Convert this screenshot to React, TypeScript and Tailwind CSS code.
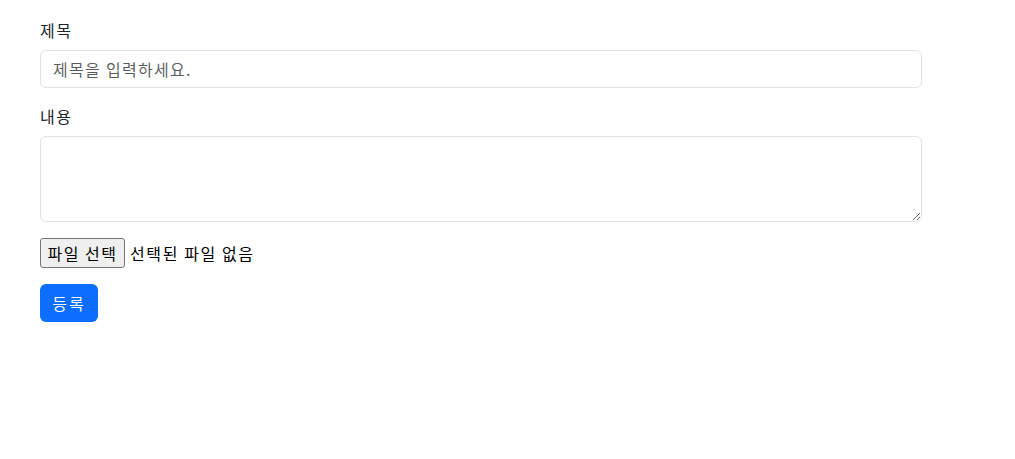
import React from "react";

export default function App() {
  return (
    <div
      className="min-h-[459px] bg-white text-[#212529] text-[16px] leading-[24px] tracking-[1.5px]"
      style={{ fontFamily: '"Noto Sans CJK KR", "Noto Sans", "Liberation Sans", sans-serif' }}
    >
      <div className="pl-[40px] pt-[18px] w-[922px]">
        <form className="flex flex-col" onSubmit={(e) => e.preventDefault()}>
          <div className="mb-4">
            <label className="block mb-2">제목</label>
            <input
              type="text"
              placeholder="제목을 입력하세요."
              className="block w-full h-[38px] px-3 py-[6px] border border-[#dee2e6] rounded-[6px] bg-white text-[16px] leading-[24px] tracking-[1.3px] placeholder:text-[#212529bf] outline-none"
            />
          </div>
          <div className="mb-4">
            <label className="block mb-2">내용</label>
            <textarea
              rows={3}
              className="block w-full h-[86px] px-3 py-[6px] border border-[#dee2e6] rounded-[6px] bg-white text-[16px] leading-[24px] outline-none"
            />
          </div>
          <div className="mb-4 flex items-center h-[30px]">
            <button
              type="button"
              className="h-[30px] w-[85px] px-0 bg-[#efefef] border border-[#767676] rounded-[3px] text-[16px] leading-[20px] text-black tracking-[1.5px]"
            >
              파일 선택
            </button>
            <span className="ml-[5px] text-black tracking-[1.6px]">선택된 파일 없음</span>
          </div>
          <div>
            <button
              type="submit"
              className="h-[38px] w-[58px] px-0 bg-[#0d6efd] text-white rounded-[6px] text-[16px] leading-[24px] tracking-[2px]"
            >
              등록
            </button>
          </div>
        </form>
      </div>
    </div>
  );
}
